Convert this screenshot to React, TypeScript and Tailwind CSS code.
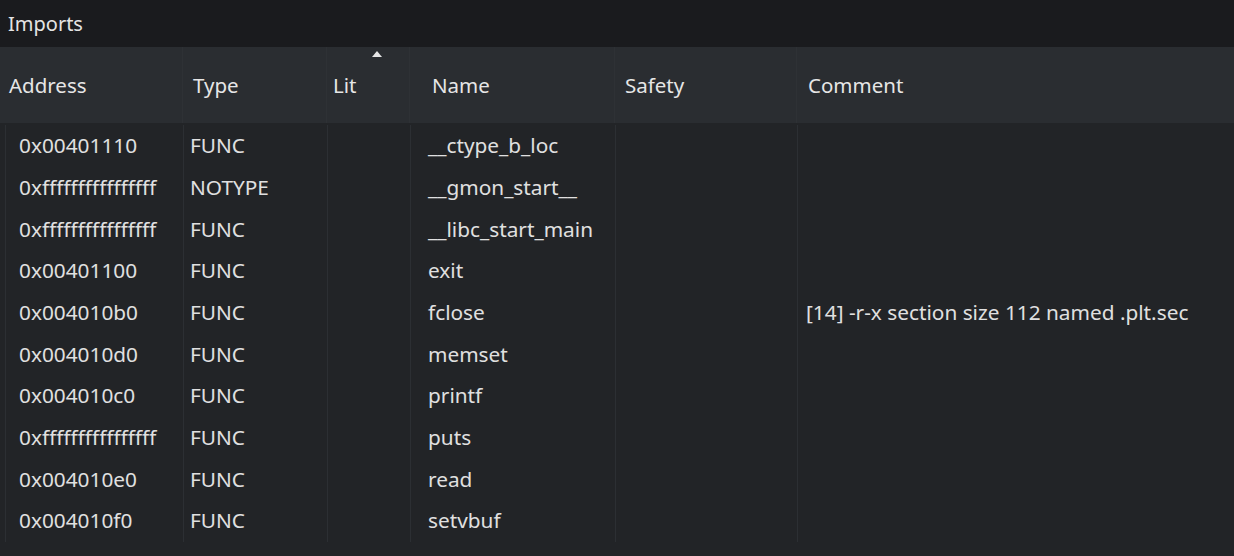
import React from "react";

const rows = [
  ["0x00401110", "FUNC", "", "__ctype_b_loc", "", ""],
  ["0xffffffffffffffff", "NOTYPE", "", "__gmon_start__", "", ""],
  ["0xffffffffffffffff", "FUNC", "", "__libc_start_main", "", ""],
  ["0x00401100", "FUNC", "", "exit", "", ""],
  ["0x004010b0", "FUNC", "", "fclose", "", "[14] -r-x section size 112 named .plt.sec"],
  ["0x004010d0", "FUNC", "", "memset", "", ""],
  ["0x004010c0", "FUNC", "", "printf", "", ""],
  ["0xffffffffffffffff", "FUNC", "", "puts", "", ""],
  ["0x004010e0", "FUNC", "", "read", "", ""],
  ["0x004010f0", "FUNC", "", "setvbuf", "", ""],
];

const bodyPad = ["pl-[13px]", "pl-[6px]", "pl-[6px]", "pl-[17px]", "pl-[8px]", "pl-[8px]"];

export default function App() {
  return (
    <div
      className="w-[1234px] h-[556px] bg-[#222427] text-[#e0e0e0] overflow-hidden flex flex-col"
      style={{ fontFamily: '"Noto Sans", "Open Sans", sans-serif' }}
    >
      <div className="h-[47px] bg-[#1a1b1e] flex items-center pl-[8px] text-[20px] text-[#e4e4e4] shrink-0">
        Imports
      </div>
      <div className="h-[76px] bg-[#2a2d31] grid grid-cols-[183px_144px_83px_205px_182px_1fr] items-center text-[20.5px] text-[#e6e6e6] shrink-0">
        <div className="pl-[9px] h-full flex items-center border-r border-[#2e3135]">Address</div>
        <div className="pl-[10px] h-full flex items-center border-r border-[#2e3135]">Type</div>
        <div className="pl-[6px] h-full flex items-center border-r border-[#2e3135] relative">
          Lit
          <svg className="absolute left-[45px] top-[4px]" width="10" height="6" viewBox="0 0 10 6">
            <polygon points="5,0 10,6 0,6" fill="#e6e6e6" />
          </svg>
        </div>
        <div className="pl-[22px] h-full flex items-center border-r border-[#2e3135]">Name</div>
        <div className="pl-[10px] h-full flex items-center border-r border-[#2e3135]">Safety</div>
        <div className="pl-[11px] h-full flex items-center">Comment</div>
      </div>
      <div className="pt-[2px] pb-[14px] flex-1">
        <div className="grid grid-cols-[178px_144px_83px_205px_182px_1fr] ml-[5px] h-[417px]">
          {[0, 1, 2, 3, 4, 5].map((c) => (
            <div
              key={c}
              className={`flex flex-col border-l border-[#2c2f33] ${bodyPad[c]}`}
            >
              {rows.map((r, i) => (
                <div key={i} className="h-[41.7px] flex items-center text-[20.8px] whitespace-nowrap">
                  {r[c]}
                </div>
              ))}
            </div>
          ))}
        </div>
      </div>
    </div>
  );
}
